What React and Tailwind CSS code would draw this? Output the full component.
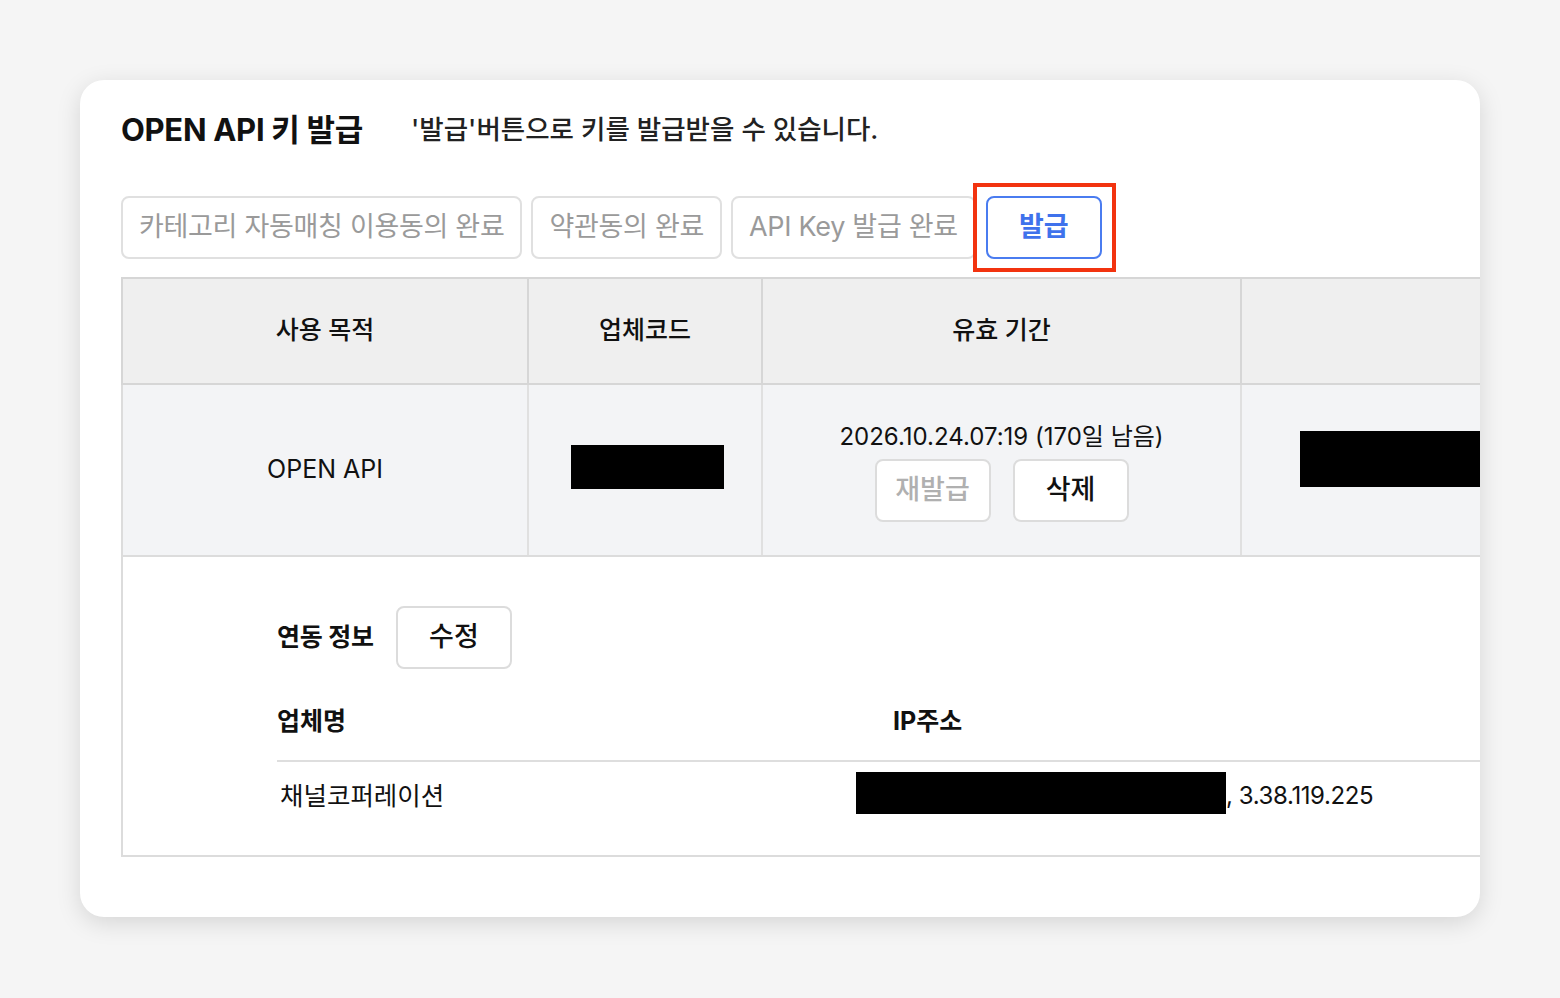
const FONT = { fontFamily: "Inter, 'Noto Sans CJK KR', sans-serif" };

function StepButton({ children }) {
  return (
    <div className="h-[63px] px-[16px] flex items-center rounded-lg border-2 border-[#e0e0e0] bg-white text-[27px] text-[#9a9a9a] tracking-[-0.3px]">
      {children}
    </div>
  );
}

function SmallButton({ children, muted }) {
  return (
    <button
      className={
        "w-[116px] h-[63px] rounded-lg border-2 border-[#dcdcdc] bg-white text-[27px] font-medium " +
        (muted ? "text-[#b0b0b0]" : "text-[#111]")
      }
    >
      {children}
    </button>
  );
}

export default function App() {
  return (
    <div className="min-h-screen bg-[#f5f5f5] pt-[80px] px-[80px]" style={FONT}>
      <div className="h-[837px] bg-white rounded-3xl shadow-[0_6px_24px_rgba(0,0,0,0.13)] overflow-hidden pl-[41px] pt-[30px]">
        {/* title */}
        <div className="flex items-center h-[40px]">
          <h1 className="text-[31px] font-bold text-[#111] tracking-[-0.3px]">OPEN API 키 발급</h1>
          <p className="ml-[48px] text-[26.5px] font-medium text-[#222]">
            '발급'버튼으로 키를 발급받을 수 있습니다.
          </p>
        </div>

        {/* steps */}
        <div className="flex items-center gap-[9px] mt-[46px]">
          <StepButton>카테고리 자동매칭 이용동의 완료</StepButton>
          <StepButton>약관동의 완료</StepButton>
          <StepButton>API Key 발급 완료</StepButton>
          <div className="relative ml-[1px]">
            <button className="w-[116px] h-[63px] rounded-lg border-2 border-[#4a7cf0] bg-white text-[27px] font-semibold text-[#3f72ec]">
              발급
            </button>
            <div className="absolute -top-[13px] -bottom-[13px] -left-[13px] -right-[14px] border-[4px] border-[#f2330f]"></div>
          </div>
        </div>

        {/* table */}
        <div className="mt-[18px] w-[1600px]">
          <div className="flex h-[108px] bg-[#efefef] border-2 border-[#d6d6d6] text-[25px] font-medium text-[#111]">
            <div className="w-[406px] flex items-center justify-center border-r-2 border-[#d6d6d6]">사용 목적</div>
            <div className="w-[234px] flex items-center justify-center border-r-2 border-[#d6d6d6]">업체코드</div>
            <div className="w-[479px] flex items-center justify-center border-r-2 border-[#d6d6d6]">유효 기간</div>
            <div className="flex-1"></div>
          </div>
          <div className="flex h-[172px] bg-[#f3f4f6] border-x-2 border-b-2 border-[#dcdcdc] text-[#111]">
            <div className="w-[406px] flex items-center justify-center border-r-2 border-[#e0e0e0] text-[25px]">
              OPEN API
            </div>
            <div className="w-[234px] flex items-center justify-center border-r-2 border-[#e0e0e0]">
              <div className="w-[153px] h-[44px] bg-black -mt-[6px] ml-[4px]"></div>
            </div>
            <div className="w-[479px] flex flex-col items-center justify-center border-r-2 border-[#e0e0e0]">
              <div className="text-[24px] leading-[30px] mt-[4px]">2026.10.24.07:19 (170일 남음)</div>
              <div className="flex gap-[22px] mt-[7px]">
                <SmallButton muted>재발급</SmallButton>
                <SmallButton>삭제</SmallButton>
              </div>
            </div>
            <div className="flex-1 flex items-center">
              <div className="ml-[58px] w-[400px] h-[56px] bg-black -mt-[22px]"></div>
            </div>
          </div>

          {/* linked info */}
          <div className="bg-white border-l-2 border-b-2 border-[#dcdcdc] pl-[154px] pt-[49px] pb-[25px]">
            <div className="flex items-center">
              <span className="text-[25px] font-bold text-[#111] tracking-[-0.2px]">연동 정보</span>
              <div className="ml-[22px]">
                <SmallButton>수정</SmallButton>
              </div>
            </div>
            <div className="flex mt-[34px] pb-[21px] border-b-2 border-[#dedede] text-[25px] font-bold text-[#111] leading-[36px]">
              <div className="w-[579px]">업체명</div>
              <div className="pl-[37px]">IP주소</div>
            </div>
            <div className="flex items-center h-[68px] text-[25.5px] text-[#111]">
              <div className="w-[579px] pl-[3px]">채널코퍼레이션</div>
              <div className="flex items-center">
                <div className="w-[370px] h-[42px] bg-black -mt-[6px]"></div>
                <span className="text-[24px] tracking-[-0.4px]">, 3.38.119.225</span>
              </div>
            </div>
          </div>
        </div>
      </div>
    </div>
  );
}
